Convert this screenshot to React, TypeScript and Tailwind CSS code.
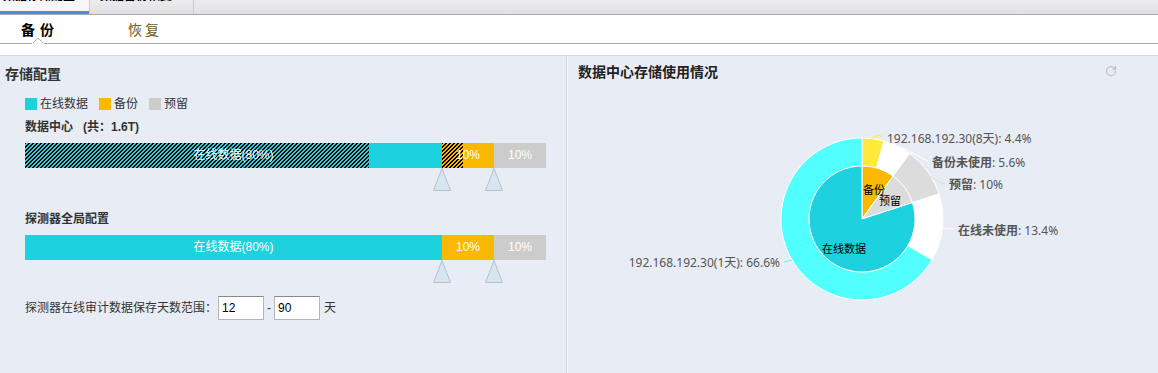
import React from "react";
import { RotateCw } from "lucide-react";

const CX = 294;
const CY = 138;

function pt(r: number, a: number): [number, number] {
  const rad = (a * Math.PI) / 180;
  return [CX + r * Math.sin(rad), CY - r * Math.cos(rad)];
}

function arc(r0: number, r1: number, a0: number, a1: number): string {
  const large = a1 - a0 > 180 ? 1 : 0;
  const [x0, y0] = pt(r1, a0);
  const [x1, y1] = pt(r1, a1);
  if (r0 === 0) {
    return `M${CX},${CY} L${x0},${y0} A${r1},${r1} 0 ${large} 1 ${x1},${y1} Z`;
  }
  const [x2, y2] = pt(r0, a1);
  const [x3, y3] = pt(r0, a0);
  return `M${x0},${y0} A${r1},${r1} 0 ${large} 1 ${x1},${y1} L${x2},${y2} A${r0},${r0} 0 ${large} 0 ${x3},${y3} Z`;
}

const outer = [
  { v: 4.4, c: "#ffe93b" },
  { v: 5.6, c: "#ffffff" },
  { v: 10, c: "#dcdcdc" },
  { v: 13.4, c: "#ffffff" },
  { v: 66.6, c: "#52ffff" },
];
const inner = [
  { v: 10, c: "#fbb800" },
  { v: 10, c: "#dcdcdc" },
  { v: 80, c: "#1ed1de" },
];

function segs(list: { v: number; c: string }[]) {
  let acc = 0;
  return list.map((s) => {
    const a0 = (acc / 100) * 360;
    acc += s.v;
    const a1 = (acc / 100) * 360;
    return { ...s, a0, a1 };
  });
}

function Tri() {
  return (
    <svg width="18" height="23" viewBox="0 0 18 23" className="block">
      <polygon points="9,0.5 17.5,22.5 0.5,22.5" fill="#d6e5f2" stroke="#b9c0c8" strokeWidth="1" />
    </svg>
  );
}

function Triangles() {
  return (
    <div className="flex h-[23px]">
      <div className="w-[408px]" />
      <Tri />
      <div className="w-[34px]" />
      <Tri />
    </div>
  );
}

function Bar({ hatched }: { hatched: boolean }) {
  return (
    <div className="flex h-[25px] w-[521px] text-[12px] text-white leading-[25px]">
      <div
        className={
          hatched
            ? "w-[417px] flex justify-center bg-[#1ed1de] bg-[repeating-linear-gradient(135deg,#000_0px,#000_1.414px,#1ed1de_1.414px,#1ed1de_2.828px)] bg-no-repeat bg-[length:344px_100%]"
            : "w-[417px] flex justify-center bg-[#1ed1de]"
        }
      >
        在线数据(80%)
      </div>
      <div
        className={
          hatched
            ? "w-[52px] flex justify-center bg-[#fbb800] bg-[repeating-linear-gradient(135deg,#000_0px,#000_1.414px,#fbb800_1.414px,#fbb800_2.828px)] bg-no-repeat bg-[length:21px_100%]"
            : "w-[52px] flex justify-center bg-[#fbb800]"
        }
      >
        10%
      </div>
      <div className="w-[52px] flex justify-center bg-[#cccccc]">10%</div>
    </div>
  );
}

export default function App() {
  const o = segs(outer);
  const i = segs(inner);
  return (
    <div className="w-[1158px] h-[373px] overflow-hidden bg-[#e8ecf4] text-[#333] font-['Liberation_Sans','Noto_Sans_CJK_SC',sans-serif]">
      {/* top tabs */}
      <div className="h-[15px] flex border-b border-[#a9a9a9] bg-gradient-to-b from-[#ededef] to-[#dfe0e3]">
        <div className="w-[89px] h-[14px] overflow-hidden bg-[#f6f6f6] border-b-[3px] border-[#4a8fd6]">
          <div className="-mt-[10px] pl-[3px] text-[12px] leading-[13px] font-bold text-black whitespace-nowrap">
            数据存储配置
          </div>
        </div>
        <div className="w-[105px] h-[14px] overflow-hidden border-l border-r border-[#cacbcf]">
          <div className="-mt-[10px] pl-[10px] text-[12px] leading-[13px] font-bold text-black whitespace-nowrap">
            数据备份恢复
          </div>
        </div>
      </div>

      {/* sub tabs */}
      <div className="relative h-[29px] flex items-center bg-white border-b border-[#a9a9a9] font-['Noto_Sans_CJK_SC',sans-serif]">
        <div className="ml-[21px] text-[14px] leading-[14px] font-bold text-black tracking-[5px]">备份</div>
        <div className="ml-[69px] text-[14px] leading-[14px] text-[#6b5b2b] tracking-[3px]">恢复</div>
        <svg width="12" height="7" viewBox="0 0 12 7" className="absolute left-[32px] bottom-[-1px]">
          <polygon points="0,7 6,1 12,7" fill="#ffffff" stroke="#b0b0b0" strokeWidth="1" />
          <rect x="0" y="6" width="12" height="1" fill="#f4f4f4" />
        </svg>
      </div>
      <div className="h-[12px] bg-white border-b border-[#d8d8d8]" />

      {/* main */}
      <div className="flex h-[317px]">
        {/* left */}
        <div className="w-[566px] flex flex-col">
          <div className="mt-[7px] ml-[5px] h-[20px] leading-[20px] text-[14px] font-bold text-[#333] font-['Noto_Sans_CJK_SC',sans-serif]">
            存储配置
          </div>
          <div className="mt-[13px] ml-[25px] h-[16px] flex items-center text-[12px] text-[#333]">
            <span className="w-[12px] h-[12px] bg-[#1ed1de]" />
            <span className="ml-[3px]">在线数据</span>
            <span className="ml-[11px] w-[12px] h-[12px] bg-[#fbb800]" />
            <span className="ml-[3px]">备份</span>
            <span className="ml-[11px] w-[12px] h-[12px] bg-[#cccccc]" />
            <span className="ml-[3px]">预留</span>
          </div>
          <div className="mt-[7px] ml-[25px] h-[16px] leading-[16px] text-[12px] font-bold text-[#333]">
            数据中心&nbsp;&nbsp;&nbsp;(共：1.6T)
          </div>
          <div className="mt-[8px] ml-[25px]">
            <Bar hatched />
            <Triangles />
          </div>
          <div className="mt-[20px] ml-[25px] h-[16px] leading-[16px] text-[12px] font-bold text-[#333]">
            探测器全局配置
          </div>
          <div className="mt-[8px] ml-[25px]">
            <Bar hatched={false} />
            <Triangles />
          </div>
          <div className="mt-[13px] ml-[25px] h-[24px] flex items-center text-[12px] text-[#333]">
            <span>探测器在线审计数据保存天数范围：</span>
            <div className="ml-[1px] w-[46px] h-[24px] bg-white border border-[#b5b5b5] border-t-[#8a8a8a] px-[3px] leading-[22px] text-black">12</div>
            <span className="mx-[3px]">-</span>
            <div className="w-[46px] h-[24px] bg-white border border-[#b5b5b5] border-t-[#8a8a8a] px-[3px] leading-[22px] text-black">90</div>
            <span className="ml-[4px]">天</span>
          </div>
        </div>

        {/* separator */}
        <div className="w-[2px] border-l border-[#d3d7de] bg-[#f8f9fb]" />

        {/* right */}
        <div className="flex-1 flex flex-col">
          <div className="mt-[5px] h-[20px] flex items-center justify-between pl-[10px] pr-[41px]">
            <span className="text-[14px] font-bold text-[#222] font-['Noto_Sans_CJK_SC',sans-serif]">数据中心存储使用情况</span>
            <RotateCw size={12} color="#bdbdbd" strokeWidth={2.5} />
          </div>
          <svg width="590" height="292" className="block" fontFamily="'Noto Sans','Noto Sans CJK SC',sans-serif">
            {o.map((s, k) => (
              <path key={"o" + k} d={arc(53, 81, s.a0, s.a1)} fill={s.c} stroke="#ffffff" strokeWidth="1" />
            ))}
            {i.map((s, k) => (
              <path key={"i" + k} d={arc(0, 53, s.a0, s.a1)} fill={s.c} stroke="#ffffff" strokeWidth="1" />
            ))}
            {/* leader lines */}
            <polyline points="303,58 308,55 314,55" fill="none" stroke="#ffe93b" strokeWidth="1" />
            <polyline points="335,67 352,76 360,80" fill="none" stroke="#ffffff" strokeWidth="1" />
            <polyline points="362,95 371,101 377,103" fill="none" stroke="#dcdcdc" strokeWidth="1" />
            <polyline points="375,147 386,148" fill="none" stroke="#ffffff" strokeWidth="1" />
            <polyline points="224,179 216,181" fill="none" stroke="#52ffff" strokeWidth="1" />
            {/* outer labels */}
            <g fontSize="12" fill="#555" dominantBaseline="central">
              <text x="319" y="57">192.168.192.30(8天): 4.4%</text>
              <text x="364" y="81"><tspan fontWeight="bold">备份未使用</tspan>: 5.6%</text>
              <text x="381" y="103"><tspan fontWeight="bold">预留</tspan>: 10%</text>
              <text x="390" y="149"><tspan fontWeight="bold">在线未使用</tspan>: 13.4%</text>
              <text x="212" y="181" textAnchor="end">192.168.192.30(1天): 66.6%</text>
            </g>
            {/* inner labels */}
            <g fontSize="11" fill="#000" dominantBaseline="central">
              <text x="295" y="108">备份</text>
              <text x="311" y="119">预留</text>
              <text x="254" y="167">在线数据</text>
            </g>
          </svg>
        </div>
      </div>
    </div>
  );
}
